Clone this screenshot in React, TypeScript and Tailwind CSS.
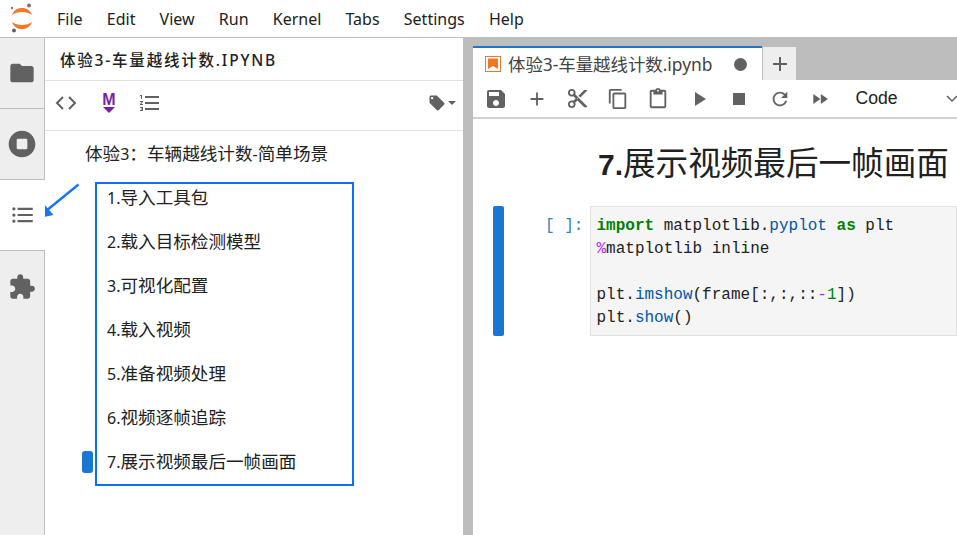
import type { ReactNode } from "react";

const sans = "font-['Noto_Sans','Noto_Sans_CJK_SC',sans-serif]";

const Icon = ({ d, className = "" }: { d: string; className?: string }) => (
  <svg viewBox="0 0 24 24" className={className} fill="currentColor">
    <path d={d} />
  </svg>
);

const paths = {
  folder: "M10 4H4c-1.1 0-2 .9-2 2v12c0 1.1.9 2 2 2h16c1.1 0 2-.9 2-2V8c0-1.1-.9-2-2-2h-8l-2-2z",
  stop: "M12 2C6.48 2 2 6.48 2 12s4.48 10 10 10 10-4.48 10-10S17.52 2 12 2zm4 13a1 1 0 0 1-1 1H9a1 1 0 0 1-1-1V9a1 1 0 0 1 1-1h6a1 1 0 0 1 1 1v6z",
  list: "M7 5.4h14v1.9H7zM7 11.05h14v1.9H7zM7 16.7h14v1.9H7zM3.6 4.8a1.5 1.5 0 1 1 0 3 1.5 1.5 0 0 1 0-3zM3.6 10.5a1.5 1.5 0 1 1 0 3 1.5 1.5 0 0 1 0-3zM3.6 16.2a1.5 1.5 0 1 1 0 3 1.5 1.5 0 0 1 0-3z",
  puzzle: "M20.5 11H19V7c0-1.1-.9-2-2-2h-4V3.5C13 2.12 11.88 1 10.5 1S8 2.12 8 3.5V5H4c-1.1 0-1.99.9-1.99 2v3.8H3.5c1.49 0 2.7 1.21 2.7 2.7s-1.21 2.7-2.7 2.7H2V20c0 1.1.9 2 2 2h3.8v-1.5c0-1.49 1.21-2.7 2.7-2.7 1.49 0 2.7 1.21 2.7 2.7V22H17c1.1 0 2-.9 2-2v-4h1.5c1.38 0 2.5-1.12 2.5-2.5S21.88 11 20.5 11z",
  numbered: "M2 17h2v.5H3v1h1v.5H2v1h3v-4H2v1zm1-9h1V4H2v1h1v3zm-1 3h1.8L2 13.1v.9h3v-1H3.2L5 10.9V10H2v1zm5-6v2h14V5H7zm0 14h14v-2H7v2zm0-6h14v-2H7v2z",
  tag: "M21.41 11.58l-9-9C12.05 2.22 11.55 2 11 2H4c-1.1 0-2 .9-2 2v7c0 .55.22 1.05.59 1.42l9 9c.36.36.86.58 1.41.58.55 0 1.05-.22 1.41-.59l7-7c.37-.36.59-.86.59-1.41 0-.55-.23-1.06-.59-1.42zM5.5 7C4.67 7 4 6.33 4 5.5S4.67 4 5.5 4 7 4.67 7 5.5 6.33 7 5.5 7z",
  save: "M17 3H5c-1.11 0-2 .9-2 2v14c0 1.1.89 2 2 2h14c1.1 0 2-.9 2-2V7l-4-4zm-5 16c-1.66 0-3-1.34-3-3s1.34-3 3-3 3 1.34 3 3-1.34 3-3 3zm3-10H5V5h10v4z",
  add: "M19 13h-6v6h-2v-6H5v-2h6V5h2v6h6v2z",
  cut: "M9.64 7.64c.23-.5.36-1.05.36-1.64 0-2.21-1.79-4-4-4S2 3.79 2 6s1.79 4 4 4c.59 0 1.14-.13 1.64-.36L10 12l-2.36 2.36C7.14 14.13 6.59 14 6 14c-2.21 0-4 1.79-4 4s1.79 4 4 4 4-1.79 4-4c0-.59-.13-1.14-.36-1.64L12 14l7 7h3v-1L9.64 7.64zM6 8c-1.1 0-2-.89-2-2s.9-2 2-2 2 .89 2 2-.9 2-2 2zm0 12c-1.1 0-2-.89-2-2s.9-2 2-2 2 .89 2 2-.9 2-2 2zm6-7.5c-.28 0-.5-.22-.5-.5s.22-.5.5-.5.5.22.5.5-.22.5-.5.5zM19 3l-6 6 2 2 7-7V3z",
  copy: "M16 1H4c-1.1 0-2 .9-2 2v14h2V3h12V1zm3 4H8c-1.1 0-2 .9-2 2v14c0 1.1.9 2 2 2h11c1.1 0 2-.9 2-2V7c0-1.1-.9-2-2-2zm0 16H8V7h11v14z",
  paste: "M19 2h-4.18C14.4.84 13.3 0 12 0c-1.3 0-2.4.84-2.82 2H5c-1.1 0-2 .9-2 2v16c0 1.1.9 2 2 2h14c1.1 0 2-.9 2-2V4c0-1.1-.9-2-2-2zm-7 0c.55 0 1 .45 1 1s-.45 1-1 1-1-.45-1-1 .45-1 1-1zm7 18H5V4h2v3h10V4h2v16z",
  run: "M8 5v14l11-7z",
  square: "M6 6h12v12H6z",
  refresh: "M17.65 6.35C16.2 4.9 14.21 4 12 4c-4.42 0-7.99 3.58-7.99 8s3.57 8 7.99 8c3.73 0 6.84-2.55 7.73-6h-2.08c-.82 2.33-3.04 4-5.65 4-3.31 0-6-2.69-6-6s2.69-6 6-6c1.66 0 3.14.69 4.22 1.78L13 11h7V4l-2.35 2.35z",
  forward: "M4 18l8.5-6L4 6v12zm9-12v12l8.5-6L13 6z",
};

const JupyterLogo = () => (
  <svg viewBox="0 0 32 34" className="h-[34px] w-[32px]">
    <path d="M6 13C9 3.5 23 3.5 26 13C21 9 11 9 6 13Z" fill="#f37726" />
    <path d="M6 20C9 29.5 23 29.5 26 20C21 24 11 24 6 20Z" fill="#f37726" />
    <circle cx="23" cy="3.5" r="2" fill="#767677" />
    <circle cx="6" cy="6" r="1.2" fill="#767677" />
    <circle cx="8" cy="28.5" r="2" fill="#616161" />
  </svg>
);

const SideTab = ({ children, active, last }: { children: ReactNode; active?: boolean; last?: boolean }) => (
  <div
    className={
      active
        ? "relative z-10 -mr-px flex h-[70px] items-center justify-center bg-white"
        : `flex h-[71px] items-center justify-center text-[#616161] ${last ? "" : "border-b border-[#bdbdbd]"}`
    }
  >
    {children}
  </div>
);

const ToolBtn = ({ d, size }: { d: string; size: string }) => (
  <div className="flex w-[40.5px] shrink-0 items-center justify-center">
    <Icon d={d} className={size} />
  </div>
);

const tocItems = [
  ["1.", "导入工具包"],
  ["2.", "载入目标检测模型"],
  ["3.", "可视化配置"],
  ["4.", "载入视频"],
  ["5.", "准备视频处理"],
  ["6.", "视频逐帧追踪"],
  ["7.", "展示视频最后一帧画面"],
];

export default function App() {
  return (
    <div className={`relative flex h-[535px] w-[957px] flex-col overflow-hidden bg-white ${sans}`}>
      {/* menu */}
      <div className="flex h-[38px] shrink-0 items-center border-b border-[#bdbdbd] pl-[6px] text-[16px] text-[#212121]">
        <JupyterLogo />
        <div className="ml-[19px] flex gap-[24.2px]">
          {["File", "Edit", "View", "Run", "Kernel", "Tabs", "Settings", "Help"].map((m) => (
            <span key={m}>{m}</span>
          ))}
        </div>
      </div>

      <div className="flex min-h-0 flex-1">
        {/* side bar */}
        <div className="w-[45px] shrink-0 border-r border-[#bdbdbd] bg-[#eeeeee]">
          <SideTab>
            <Icon d={paths.folder} className="h-[28px] w-[28px]" />
          </SideTab>
          <SideTab>
            <Icon d={paths.stop} className="h-[32px] w-[32px]" />
          </SideTab>
          <SideTab active>
            <Icon d={paths.list} className="h-[26px] w-[26px] text-[#616161]" />
          </SideTab>
          <div className="border-t border-[#bdbdbd]">
            <SideTab last>
              <Icon d={paths.puzzle} className="h-[28px] w-[28px]" />
            </SideTab>
          </div>
        </div>

        {/* table of contents */}
        <div className="flex w-[418px] shrink-0 flex-col">
          <div className="flex h-[43px] shrink-0 items-center border-b border-[#e0e0e0] pl-[15px] pt-[3px] text-[15.5px] font-medium tracking-[1.8px] text-[#212121]">
            体验3-车量越线计数.IPYNB
          </div>
          <div className="flex h-[50px] shrink-0 items-center border-b border-[#e0e0e0] pb-[5px] pl-[9px] pr-[7px] text-[#616161]">
            <svg viewBox="0 0 24 24" className="h-[24px] w-[24px]" fill="none" stroke="currentColor" strokeWidth="2">
              <path d="M9 6l-6 6 6 6M15 6l6 6-6 6" />
            </svg>
            <div className="ml-[19px] flex w-[24px] flex-col items-center text-[#7b1fa2]">
              <span className="font-['Liberation_Sans',sans-serif] text-[16px] leading-[13px] font-bold">M</span>
              <svg viewBox="0 0 12 6" className="mt-[1px] h-[6px] w-[12px]" fill="currentColor">
                <path d="M0 0h12L6 6z" />
              </svg>
            </div>
            <Icon d={paths.numbered} className="ml-[17px] h-[24px] w-[24px]" />
            <div className="ml-auto flex items-center">
              <Icon d={paths.tag} className="h-[18px] w-[18px]" />
              <svg viewBox="0 0 8 4" className="ml-[2px] h-[4px] w-[8px]" fill="currentColor">
                <path d="M0 0h8L4 4z" />
              </svg>
            </div>
          </div>
          <div className="relative flex-1 text-[17.6px] text-[#212121]">
            <div className="h-[34px] pl-[40px] pt-[10px] leading-[24px]">
              体验<span className="text-[16px]">3</span>：车辆越线计数<span className="text-[16px]">-</span>简单场景
            </div>
            <div className="mt-[20px] flex flex-col gap-[20px] pl-[62px]">
              {tocItems.map(([num, title]) => (
                <div key={num} className="h-[24px] leading-[24px]">
                  <span className="text-[16px]">{num}</span>
                  {title}
                </div>
              ))}
            </div>
            <div className="absolute left-[37px] top-[320px] h-[22px] w-[11px] rounded-[3px] bg-[#1976d2]" />
          </div>
        </div>

        {/* notebook */}
        <div className="flex min-w-0 flex-1 flex-col border-l-[10px] border-[#bdbdbd]">
          <div className="flex h-[42px] shrink-0 items-end bg-[#bdbdbd]">
            <div className="flex h-[34px] w-[289px] items-center border-t-2 border-[#1976d2] bg-white pl-[12px] text-[#424242]">
              <svg viewBox="0 0 16 16" className="h-[16px] w-[16px] shrink-0">
                <rect x="0.5" y="0.5" width="15" height="15" fill="#fff" stroke="#f37726" />
                <path d="M3 2.5h10v10.5L8 10 3 13z" fill="#f37726" />
              </svg>
              <span className="ml-[7px] whitespace-nowrap text-[17.4px]">体验3-车量越线计数.ipynb</span>
              <span className="ml-[22px] h-[13px] w-[13px] shrink-0 rounded-full bg-[#616161]" />
            </div>
            <div className="ml-px flex h-[33px] w-[33px] items-center justify-center bg-[#eeeeee] text-[#616161]">
              <Icon d={paths.add} className="h-[24px] w-[24px]" />
            </div>
          </div>
          <div className="flex h-[39px] shrink-0 items-center border-b-2 border-[#d0d0d0] pl-[3px] text-[#616161]">
            <ToolBtn d={paths.save} size="h-[24px] w-[24px]" />
            <ToolBtn d={paths.add} size="h-[22px] w-[22px]" />
            <ToolBtn d={paths.cut} size="h-[23px] w-[23px]" />
            <ToolBtn d={paths.copy} size="h-[22px] w-[22px]" />
            <ToolBtn d={paths.paste} size="h-[22px] w-[22px]" />
            <ToolBtn d={paths.run} size="h-[24px] w-[24px]" />
            <ToolBtn d={paths.square} size="h-[24px] w-[24px]" />
            <ToolBtn d={paths.refresh} size="h-[22px] w-[22px]" />
            <ToolBtn d={paths.forward} size="h-[20px] w-[20px]" />
            <span className="ml-[15px] font-['Liberation_Sans',sans-serif] text-[17.6px] text-[#212121]">Code</span>
            <svg viewBox="0 0 12 8" className="ml-[48px] h-[8px] w-[12px] shrink-0" fill="none" stroke="#616161" strokeWidth="1.5">
              <path d="M1 1l5 5 5-5" />
            </svg>
          </div>
          <div className="flex-1 overflow-hidden">
            <div className="h-[65px] whitespace-nowrap pl-[125px] pt-[26px] font-['Liberation_Sans','Noto_Sans_CJK_SC',sans-serif] text-[32.6px] leading-[38px] text-[#212121]">
              <span className="text-[30px] font-bold">7.</span>展示视频最后一帧画面
            </div>
            <div className="mt-[22px] flex">
              <div className="ml-[20px] h-[130px] w-[11px] shrink-0 rounded-[2px] bg-[#1976d2]" />
              <div className="w-[86px] shrink-0 whitespace-pre pl-[41px] pt-[9px] font-['Liberation_Mono',monospace] text-[16px] leading-[23px] text-[#307fc1]">
                {"[ ]:"}
              </div>
              <div className="h-[130px] flex-1 whitespace-pre border border-[#e0e0e0] bg-[#f5f5f5] pl-[5.5px] pt-[8px] font-['Liberation_Mono',monospace] text-[16px] leading-[23px] text-[#212121]">
                <div>
                  <b className="text-[#008000]">import</b> matplotlib.
                  <span className="text-[#05a]">pyplot</span> <b className="text-[#008000]">as</b> plt
                </div>
                <div>
                  <span className="text-[#aa22ff]">%</span>matplotlib inline
                </div>
                <div>&nbsp;</div>
                <div>
                  plt.<span className="text-[#05a]">imshow</span>(frame[:,:,::<span className="text-[#aa22ff]">-</span>
                  <span className="text-[#008000]">1</span>])
                </div>
                <div>
                  plt.<span className="text-[#05a]">show</span>()
                </div>
              </div>
            </div>
          </div>
        </div>
      </div>

      {/* annotation over the screenshot */}
      <div className="pointer-events-none absolute left-[95px] top-[182px] h-[304px] w-[259px] border-2 border-[#0d6efd]" />
      <svg viewBox="0 0 957 535" className="pointer-events-none absolute left-0 top-0 h-[535px] w-[957px]">
        <path d="M78.5 184.5L46 211" stroke="#1677f2" strokeWidth="2.4" fill="none" />
        <path d="M36.5 218.5L44 204L53.5 215Z" fill="#1677f2" />
      </svg>
    </div>
  );
}
